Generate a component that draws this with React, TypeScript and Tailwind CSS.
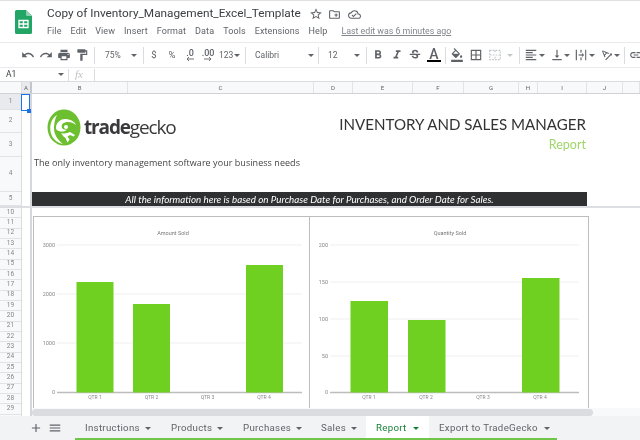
import React from "react";
import {
  MdUndo, MdRedo, MdPrint, MdFormatPaint, MdFormatBold, MdFormatItalic, MdStrikethroughS,
  MdFormatColorFill, MdBorderAll, MdFormatAlignLeft, MdVerticalAlignBottom, MdTextRotationAngleup,
  MdStarBorder, MdOutlineCreateNewFolder, MdOutlineCloudDone, MdAdd, MdMenu, MdLink,
} from "react-icons/md";

const Caret = ({ className = "" }: { className?: string }) => (
  <span className={`inline-block w-0 h-0 shrink-0 border-l-[3px] border-r-[3px] border-t-[3px] border-l-transparent border-r-transparent border-t-[#5f6368] ${className}`} />
);

const Sep = ({ className = "" }: { className?: string }) => <div className={`w-px h-[17px] bg-[#dadce0] shrink-0 ${className}`} />;

const Btn = ({ children, className = "" }: { children: React.ReactNode; className?: string }) => (
  <div className={`w-[18px] h-[18px] shrink-0 flex items-center justify-center text-[#5f6368] text-[14px] ${className}`}>{children}</div>
);

const WrapIcon = () => (
  <svg width="14" height="14" viewBox="0 0 24 24" fill="#5f6368">
    <rect x="3" y="3" width="2" height="18" />
    <rect x="19" y="3" width="2" height="18" opacity="0.9" />
    <rect x="11" y="3" width="2" height="5" />
    <rect x="11" y="16" width="2" height="5" />
    <rect x="8" y="11" width="8" height="2" />
    <path d="M14 8l3 4-3 4z" />
  </svg>
);

const MergeIcon = () => (
  <svg width="14" height="14" viewBox="0 0 24 24" fill="none" stroke="#c4c7c9" strokeWidth="2" strokeDasharray="3 2">
    <rect x="3" y="4" width="18" height="16" />
    <path d="M3 12h18M12 4v5M12 15v5" />
  </svg>
);

const DecArrow = ({ dir }: { dir: "l" | "r" }) => (
  <svg width="8" height="4" viewBox="0 0 8 4" className="shrink-0 -mt-[1px]">
    {dir === "l" ? <path d="M8 2H2M3 0L1 2l2 2" fill="none" stroke="#5f6368" strokeWidth="0.900" /> : <path d="M0 2h6M5 0l2 2-2 2" fill="none" stroke="#5f6368" strokeWidth="0.900" />}
  </svg>
);

const Logo = () => (
  <svg width="34" height="37" viewBox="0 0 34 37" className="shrink-0">
    <ellipse cx="17" cy="18.5" rx="16.5" ry="18" fill="#6cbf2e" />
    <path d="M10 6C3 10 1.5 20 5 27c2 4 6 7 11 8-5-4-9-9-9-16 0-5 1-9 3-13z" fill="#ffffff" />
    <path d="M9 19c0-6 5-9.5 10-9 5 .5 9 3 10 6-3-2.5-7-3.5-11-2.5-3 .8-4 3-3 5.5 1 1.6 3 2 5 1.5-1 1.5-5 3-8 1.5C10 21.500 9 20.500 9 19z" fill="#ffffff" />
    <circle cx="19" cy="18" r="2" fill="#ffffff" />
    <path d="M14 24c3 1 6 .5 9-1l5 3-1.500 1.500-3.500-1.500-2.500 1.500 2 3-2 3-2-4.500-2-1.500z" fill="#ffffff" />
  </svg>
);

const Chart = ({
  w, x0, x1, labelX, ticks, bars, labels, title, titleX, strong,
}: {
  w: number; x0: number; x1: number; labelX: number;
  ticks: [string, number][]; bars: [number, number, number][];
  labels: [string, number][]; title: string; titleX: number; strong: number;
}) => (
  <svg width={w} height="191" viewBox={`0 0 ${w} 191`} className="block shrink-0">
    <text x={titleX} y="17.500" textAnchor="middle" fontSize="5.500" fill="#777" fontFamily="Roboto, sans-serif">{title}</text>
    {ticks.map(([t, y]) => (
      <g key={t}>
        <text x={labelX} y={y + 1.8} textAnchor="end" fontSize="5.500" fill="#888" fontFamily="Roboto, sans-serif">{t}</text>
        <line x1={x0} x2={x1} y1={y} y2={y} stroke={t === "0" ? "#bdbdbd" : "#ebebeb"} strokeWidth={t === "0" ? 1.500 : 0.800} />
      </g>
    ))}
    {bars.map(([x, top, width]) => (
      <rect key={x} x={x} y={top} width={width} height={strong - top} fill="#70d021" />
    ))}
    {labels.map(([t, x]) => (
      <text key={t} x={x} y={strong + 6.500} textAnchor="middle" fontSize="5" fill="#888" fontFamily="Roboto, sans-serif">{t}</text>
    ))}
  </svg>
);

const columns: [string, string][] = [
  ["B", "w-[96px]"], ["C", "w-[186px]"], ["D", "w-[39px]"], ["E", "w-[60px]"], ["F", "w-[51px]"],
  ["G", "w-[55px]"], ["H", "w-[19px]"], ["I", "w-[49px]"], ["J", "w-[36px]"], ["", "w-[17px]"],
];

const topRows: [string, string, boolean][] = [
  ["1", "h-[16px]", true], ["2", "h-[23px]", false], ["3", "h-[24px]", false], ["4", "h-[35px]", false], ["5", "h-[14px]", false],
];

const lowRows = ["10","11","12","13","14","15","16","17","18","19","20","21","22","23","24","25","26","27","28","29"];

const tabs: [string, string][] = [
  ["Instructions", "w-[86px]"], ["Products", "w-[72px]"], ["Purchases", "w-[78px]"], ["Sales", "w-[55px]"],
];

export default function App() {
  return (
    <div className="w-[640px] h-[440px] overflow-hidden bg-white flex flex-col font-['Roboto',sans-serif] text-[#3c4043] blur-[0.35px]">
      {/* Title area */}
      <div className="h-[42px] shrink-0 border-t border-[#e0e0e0] flex">
        <div className="w-[46px] shrink-0 flex items-start pt-[9px] pl-[15px]">
          <svg width="17" height="24" viewBox="0 0 17 24">
            <path d="M1.500 0H11l6 6v16.500a1.500 1.500 0 0 1-1.500 1.500h-14A1.500 1.500 0 0 1 0 22.500v-21A1.500 1.500 0 0 1 1.500 0z" fill="#23a566" />
            <path d="M11 0l6 6h-4.500A1.500 1.500 0 0 1 11 4.500z" fill="#8ed1b1" />
            <path d="M4 10.500h9v7H4z" fill="none" stroke="#fff" strokeWidth="1.300" />
            <path d="M4 14h9M8.500 10.500v7" stroke="#fff" strokeWidth="1.300" />
          </svg>
        </div>
        <div className="flex-1 min-w-0 pl-px">
          <div className="flex items-center h-[24px] pt-[2px]">
            <span className="text-[11.800px] text-[#3c4043] whitespace-nowrap w-[262px]">Copy of Inventory_Management_Excel_Template</span>
            <MdStarBorder className="w-[14px] h-[14px] text-[#5f6368]" />
            <MdOutlineCreateNewFolder className="w-[13px] h-[13px] text-[#5f6368] ml-[5px]" />
            <MdOutlineCloudDone className="w-[13px] h-[13px] text-[#5f6368] ml-[7px]" />
          </div>
          <div className="flex items-center gap-[9px] text-[9px] tracking-[0.1px] text-[#5f6368] h-[13px] whitespace-nowrap">
            <span>File</span><span>Edit</span><span>View</span><span>Insert</span><span>Format</span>
            <span>Data</span><span>Tools</span><span>Extensions</span><span>Help</span>
            <span className="underline ml-[5px] text-[8.800px] tracking-normal text-[#80868b]">Last edit was 6 minutes ago</span>
          </div>
        </div>
      </div>

      {/* Toolbar */}
      <div className="h-[26px] shrink-0 border-t border-b border-[#e8eaed] flex items-center pl-[19px]">
        <Btn><MdUndo /></Btn><Btn><MdRedo /></Btn><Btn><MdPrint /></Btn><Btn><MdFormatPaint /></Btn>
        <Sep className="ml-[3px] mr-[1px]" />
        <div className="w-[47px] shrink-0 flex items-center pl-[9px] text-[8.500px] text-[#5f6368]">
          <span className="w-[26px]">75%</span><Caret />
        </div>
        <Sep className="mr-[1px]" />
        <Btn className="!text-[9.500px]">$</Btn>
        <Btn className="!text-[9.500px]">%</Btn>
        <Btn className="!text-[9px] font-medium flex-col leading-[9px]"><span>.0</span><DecArrow dir="l" /></Btn>
        <Btn className="!text-[9px] font-medium flex-col leading-[9px]"><span>.00</span><DecArrow dir="r" /></Btn>
        <div className="w-[28px] shrink-0 flex items-center gap-px text-[8.500px] text-[#5f6368] pl-[2px]">123<Caret /></div>
        <Sep className="mr-[1px]" />
        <div className="w-[71px] shrink-0 flex items-center pl-[8px] text-[8.500px] text-[#5f6368]">
          <span className="w-[53px]">Calibri</span><Caret />
        </div>
        <Sep />
        <div className="w-[47px] shrink-0 flex items-center pl-[9px] text-[8.500px] text-[#5f6368]">
          <span className="w-[26px]">12</span><Caret />
        </div>
        <Sep className="mr-[2px]" />
        <Btn><MdFormatBold /></Btn>
        <Btn className="ml-px"><MdFormatItalic /></Btn>
        <Btn><MdStrikethroughS /></Btn>
        <Btn className="ml-px flex-col text-[10px] leading-[12px] font-medium">
          <span>A</span><span className="w-[14px] h-[2.500px] bg-black shrink-0" />
        </Btn>
        <Sep className="ml-[2px] mr-[2px]" />
        <Btn><MdFormatColorFill /></Btn>
        <Btn className="ml-px"><MdBorderAll /></Btn>
        <Btn className="ml-px"><MergeIcon /></Btn>
        <div className="w-[12px] shrink-0 flex justify-center"><Caret className="!border-t-[#c4c7c9]" /></div>
        <Sep className="ml-[3px] mr-[2px]" />
        <Btn><MdFormatAlignLeft /></Btn>
        <Caret className="-ml-px" />
        <Btn className="ml-[3px]"><MdVerticalAlignBottom /></Btn>
        <Caret className="-ml-[2px]" />
        <Btn className="ml-[2px]"><WrapIcon /></Btn>
        <Caret className="-ml-px" />
        <Btn className="ml-[3px]"><MdTextRotationAngleup /></Btn>
        <Caret className="-ml-[2px]" />
        <Sep className="ml-[4px] mr-[2px]" />
        <Btn><MdLink /></Btn>
      </div>

      {/* Formula bar */}
      <div className="h-[14px] shrink-0 flex items-center border-b border-[#dadce0]">
        <div className="w-[68px] shrink-0 flex items-center pl-[6px] text-[8.500px] text-[#3c4043]">
          <span className="w-[52px]">A1</span><Caret />
        </div>
        <Sep className="!h-[12px] mr-[6px]" />
        <span className="font-['Liberation_Serif',serif] italic text-[11px] text-[#c0c2c5] w-[19px]">fx</span>
        <Sep className="!h-[12px]" />
      </div>

      {/* Column header */}
      <div className="h-[12px] shrink-0 flex bg-[#f8f9fa] border-b border-[#d0d2d5] text-[6px] text-[#5f6368] leading-[11px]">
        <div className="w-[22px] shrink-0 border-r border-[#dadce0]" />
        <div className="w-[8px] shrink-0 text-center bg-[#e8eaed]">A</div>
        <div className="w-[2px] shrink-0 bg-[#c4c7c9]" />
        {columns.map(([c, w]) => (
          <div key={c || "K"} className={`${w} shrink-0 text-center border-r border-[#e2e3e5]`}>{c}</div>
        ))}
      </div>

      {/* Frozen rows */}
      <div className="h-[112px] shrink-0 flex">
        <div className="w-[22px] shrink-0 flex flex-col bg-[#f8f9fa] border-r border-[#dadce0]">
          {topRows.map(([n, h, active]) => (
            <div key={n} className={`${h} shrink-0 flex items-center justify-center text-[6.500px] text-[#80868b] border-b border-[#e2e3e5] ${active ? "bg-[#e8eaed]" : ""}`}>{n}</div>
          ))}
        </div>
        <div className="w-[8px] shrink-0 relative">
          <div className="absolute -left-px top-0 w-[9px] h-[17px] border border-[#1a73e8]" />
          <div className="absolute -right-[1px] top-[15px] w-[4px] h-[4px] bg-[#1a73e8]" />
        </div>
        <div className="w-[2px] shrink-0 bg-[#d5d7da]" />
        <div className="flex-1 min-w-0 w-[555px] flex flex-col">
          <div className="h-[57px] shrink-0 flex pl-[15px] pt-[15px]">
            <Logo />
            <div className="ml-[3px] mt-[5px] text-[#3a3a3c] text-[19px] leading-[26px] font-['Open_Sans',sans-serif] tracking-[-1.150px] whitespace-nowrap w-[95px]">
              <span className="font-bold">trade</span><span>gecko</span>
            </div>
            <div className="w-[407px] flex flex-col items-end mt-[4px]">
              <div className="text-[15.100px] leading-[22px] text-[#333] font-['Lato',sans-serif] whitespace-nowrap">INVENTORY AND SALES MANAGER</div>
              <div className="text-[12.500px] leading-[20px] text-[#9fd56a] font-['Lato',sans-serif]">Report</div>
            </div>
          </div>
          <div className="h-[41px] shrink-0 text-[9px] leading-[14px] pl-[2px] pt-[5px] text-[#444] font-['Open_Sans',sans-serif] whitespace-nowrap tracking-[0.05px]">
            The only inventory management software your business needs
          </div>
          <div className="h-[14px] w-[555px] shrink-0 bg-[#2e3032] text-white text-[9.800px] leading-[14px] italic text-center font-['Lato',sans-serif] whitespace-nowrap">
            All the information here is based on Purchase Date for Purchases, and Order Date for Sales.
          </div>
        </div>
      </div>

      {/* Freeze divider */}
      <div className="h-[2px] shrink-0 bg-[#dcdee1]" />

      {/* Lower rows */}
      <div className="h-[208px] shrink-0 flex overflow-hidden">
        <div className="w-[22px] shrink-0 bg-[#f8f9fa] border-r border-[#dadce0] flex flex-col">
          {lowRows.map((n) => (
            <div key={n} className="h-[10.330px] shrink-0 flex items-center justify-center text-[6.500px] text-[#80868b] border-b border-[#e2e3e5]">{n}</div>
          ))}
        </div>
        <div className="w-[8px] shrink-0" />
        <div className="w-[2px] shrink-0 bg-[#d5d7da]" />
        <div className="flex-1 min-w-0 flex flex-col">
          <div className="h-[200px] pt-[8px] pl-px shrink-0">
            <div className="w-[556px] h-[192px] border-t border-l border-r border-[#bdbdbd] flex">
              <div className="w-[276px] shrink-0 border-r border-[#bdbdbd]">
                <Chart
                  w={275} x0={23} x1={268} labelX={21} title="Amount Sold" titleX={139} strong={175.500}
                  ticks={[["3000", 28], ["2000", 77], ["1000", 126], ["0", 175.500]]}
                  bars={[[42.500, 65, 37], [99, 87, 37], [212, 48, 37]]}
                  labels={[["QTR 1", 61], ["QTR 2", 117.500], ["QTR 3", 173.500], ["QTR 4", 230]]}
                />
              </div>
              <div className="flex-1 min-w-0">
                <Chart
                  w={278} x0={20} x1={269} labelX={18} title="Quantity Sold" titleX={140} strong={175.500}
                  ticks={[["200", 28], ["150", 65], ["100", 102], ["50", 139], ["0", 175.500]]}
                  bars={[[40.500, 84, 37.500], [98, 103, 37.500], [212, 61, 37.500]]}
                  labels={[["QTR 1", 59], ["QTR 2", 116], ["QTR 3", 173], ["QTR 4", 230]]}
                />
              </div>
            </div>
          </div>
          <div className="h-[8px] shrink-0 bg-[#f8f9fa] pt-px">
            <div className="w-[561px] h-[7px] rounded-full bg-[#dadce0]" />
          </div>
        </div>
      </div>

      {/* Tabs */}
      <div className="h-[24px] shrink-0 bg-[#f1f3f4] flex pl-[29px] text-[9.700px] tracking-[0.3px] text-[#5f6368] whitespace-nowrap">
        <div className="w-[46px] shrink-0 flex items-center text-[#5f6368] text-[14px] gap-[5px]">
          <MdAdd /><MdMenu />
        </div>
        {tabs.map(([t, w]) => (
          <div key={t} className={`${w} shrink-0 h-full flex items-center pl-[10px] pt-[2px] gap-[5px] border-b-2 border-[#70c44a]`}>
            <span>{t}</span><Caret />
          </div>
        ))}
        <div className="w-[63px] shrink-0 h-full bg-white flex items-center pl-[10px] pt-[2px] gap-[6px] text-[#188038] border-b-2 border-[#70c44a]">
          <span>Report</span><Caret className="!border-t-[#188038]" />
        </div>
        <div className="w-[128px] shrink-0 h-full flex items-center pl-[10px] pt-[2px] gap-[6px] border-b-2 border-[#70c44a]">
          <span>Export to TradeGecko</span><Caret />
        </div>
      </div>
    </div>
  );
}
